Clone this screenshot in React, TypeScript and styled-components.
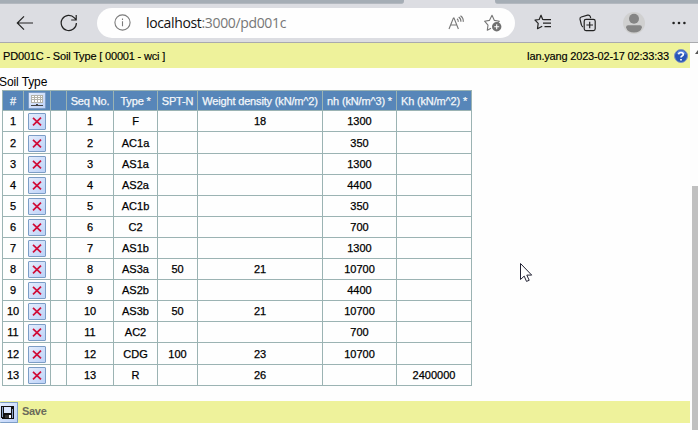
import React from "react";
import styled, { createGlobalStyle } from "styled-components";

const Global = createGlobalStyle`
  * { box-sizing: border-box; }
  html, body { margin: 0; height: 100%; overflow: hidden; background: #fefefe; }
  body { font: 11px "Liberation Sans", Arial, sans-serif; color: #000; }
`;

const Window = styled.div`
  width: 698px;
  height: 430px;
  display: flex;
  flex-direction: column;
  overflow: hidden;
  position: relative;
`;

const Tabs = styled.div`
  height: 4px;
  flex: none;
  display: flex;
  justify-content: space-between;
  background: #dcdde2;
`;

const TabStrip = styled.div<{ $width: number; $side: "left" | "right" }>`
  width: ${(p) => p.$width}px;
  background: #a5adb5;
  border-bottom: 1px solid #b3b8bf;
  border-radius: ${(p) => (p.$side === "left" ? "0 0 3px 0" : "0 0 0 3px")};
`;

const Toolbar = styled.div`
  height: 39px;
  flex: none;
  display: flex;
  align-items: center;
  padding: 0 12px 1px 16px;
  background: #dcdde2;
  border-bottom: 1px solid #a9aaae;
  svg { flex: none; display: block; }
`;

const NavButtons = styled.div`
  display: flex;
  align-items: center;
  gap: 26px;
`;

const Address = styled.div`
  width: 418px;
  height: 30px;
  margin-left: 19px;
  margin-right: 19px;
  padding: 0 13px 0 17px;
  display: flex;
  align-items: center;
  border-radius: 15px;
  background: #fefefe;
`;

const Url = styled.div`
  flex: 1;
  margin-left: 15px;
  font: 14px/20px "Open Sans", "Noto Sans", sans-serif;
  letter-spacing: -0.35px;
  color: #777;
  white-space: nowrap;
  span { color: #111; }
`;

const AddressActions = styled.div`
  display: flex;
  align-items: center;
  gap: 19px;
`;

const Actions = styled.div`
  flex: 1;
  display: flex;
  align-items: center;
  justify-content: space-between;
`;

const Body = styled.div`
  flex: 1;
  display: flex;
  min-height: 0;
`;

const Page = styled.main`
  width: 690px;
`;

const TitleBar = styled.header`
  height: 25px;
  display: flex;
  align-items: center;
  justify-content: space-between;
  padding: 0 2px 0 3px;
  background: #eef29b;
  white-space: nowrap;
  letter-spacing: -0.17px;
  -webkit-text-stroke: 0.15px currentColor;
`;

const User = styled.div`
  display: flex;
  align-items: center;
  gap: 5px;
  letter-spacing: -0.18px;
`;

const SectionTitle = styled.div`
  height: 15px;
  margin: 7px 0 0 -1px;
  font-size: 12px;
  line-height: 15px;
  letter-spacing: -0.1px;
`;

const Table = styled.div`
  width: 470px;
  margin-left: 2px;
  border-top: 1px solid #9bb3b3;
  border-left: 1px solid #9bb3b3;
`;

const Row = styled.div<{ $height: number; $head?: boolean }>`
  display: grid;
  grid-template-columns: 21px 27px 16px 47px 44px 40px 125px 74px 75px;
  height: ${(p) => p.$height}px;
  background: ${(p) => (p.$head ? "#5786b9" : "#fefefe")};
  color: ${(p) => (p.$head ? "#f4f7fa" : "#000")};
  letter-spacing: ${(p) => (p.$head ? -0.16 : 0)}px;
`;

const Cell = styled.div<{ $low?: boolean }>`
  display: flex;
  align-items: ${(p) => (p.$low ? "flex-end" : "center")};
  justify-content: center;
  padding-bottom: ${(p) => (p.$low ? 1 : 0)}px;
  border-right: 1px solid #9bb3b3;
  border-bottom: 1px solid #9bb3b3;
  white-space: nowrap;
  -webkit-text-stroke: 0.25px currentColor;
`;

const IconButton = styled.button`
  width: 18px;
  height: 17px;
  padding: 0;
  flex: none;
  display: grid;
  place-items: center;
  border: 1px solid #7c9dc6;
  border-radius: 1px;
  background: linear-gradient(135deg, #e4edfd, #bdd2f8);
  svg { display: block; }
`;

const SaveBar = styled.footer`
  height: 22px;
  margin-top: 15px;
  display: flex;
  align-items: center;
  background: #eef29b;
`;

const SaveButton = styled(IconButton)`
  height: 21px;
  border-left: 0;
  margin-top: 1px;
  padding-right: 2px;
`;

const SaveLabel = styled.span`
  margin: 0 0 2px 4px;
  font-weight: bold;
  letter-spacing: -0.3px;
  color: #6b6b5a;
`;

const ScrollTrack = styled.aside`
  flex: 1;
  padding-left: 2px;
  display: flex;
  flex-direction: column;
  justify-content: space-between;
  align-items: stretch;
  background: #fdfdfd;
`;

const ScrollArrow = styled.svg`
  width: 3px;
  height: 4px;
  margin: 7px 0 0 3px;
`;

const ScrollThumb = styled.div`
  height: 244px;
  background: #c0c0c0;
`;

const Cursor = styled.svg`
  position: absolute;
  left: 519px;
  top: 262px;
`;

const BackIcon = () => (
  <svg width="18" height="16" viewBox="0 0 18 16" fill="none" stroke="#222" strokeWidth="1.2">
    <path d="M17 8H1.5M8 1.3 1.3 8 8 14.7" />
  </svg>
);

const ReloadIcon = () => (
  <svg width="18" height="18" viewBox="0 0 18 18" fill="none" stroke="#222" strokeWidth="1.2">
    <path d="M16.4 9A7.6 7.6 0 1 1 14.4 3.8L16 5.6M16.2 1v5h-5" />
  </svg>
);

const InfoIcon = () => (
  <svg width="17" height="17" viewBox="0 0 17 17" fill="none" stroke="#7b7b7b" strokeWidth="1.1">
    <circle cx="8.5" cy="8.5" r="7.6" />
    <path d="M8.5 7.3v5M8.5 4.5v1.4" />
  </svg>
);

const ReadAloudIcon = () => (
  <svg width="17" height="16" viewBox="0 0 17 16" fill="none" stroke="#777" strokeWidth="1.1">
    <path d="M1 14 5.4 3h.6L10.4 14M2.6 10h6.4M9 3.8q1.5 1 1.2 3M10.7 2q2.5 1.8 2.2 4.8M12.5 .7q3.3 2.3 2.7 6.1" />
  </svg>
);

const FavoriteAddIcon = () => (
  <svg width="18" height="18" viewBox="0 0 18 18" fill="none" stroke="#777" strokeWidth="1.1" strokeLinejoin="round">
    <path d="m7 14.2-3.7 2 .7-5-3.4-4 4.8-.8L8 1.3l2.4 5.1 5 .8-2 2" />
    <circle cx="12.7" cy="12.7" r="4.7" fill="#707070" stroke="none" />
    <path d="M12.7 10.2v5M10.2 12.7h5" stroke="#fff" />
  </svg>
);

const FavoritesIcon = () => (
  <svg width="18" height="17" viewBox="0 0 18 17" fill="none" stroke="#222" strokeWidth="1.2" strokeLinejoin="round">
    <path d="M10 5.6 8.6 5.3 7 1.2 5.2 5.5 1 6.2l3.2 3.2-.7 5.3 4.7-2.4M10 5.7h7M9 9.2h8M10.5 12.7H17" />
  </svg>
);

const CollectionsIcon = () => (
  <svg width="17" height="18" viewBox="0 0 17 18" fill="none" stroke="#222" strokeWidth="1.2">
    <path d="M3.9 13Q2.6 12 2.3 10.5L1 5.2Q.7 3.5 2.3 3L8.6 1.2Q10.6 .8 11.2 2.4L11.7 4.2" />
    <rect x="5.2" y="5.4" width="11" height="11.2" rx="1.8" />
    <path d="M10.7 7.7v6.6M7.4 11H14" />
  </svg>
);

const AvatarIcon = () => (
  <svg width="22" height="22" viewBox="0 0 22 22">
    <circle cx="11" cy="11" r="11" fill="#d0d0d0" />
    <circle cx="11" cy="6.8" r="5" fill="#858585" />
    <path d="M3 15.5q0-2.2 2.2-2.2h11.6q2.2 0 2.2 2.2-1.5 5-8 5t-8-5Z" fill="#858585" />
  </svg>
);

const MoreIcon = () => (
  <svg width="14" height="4" viewBox="0 0 14 4" fill="#222">
    <circle cx="1.6" cy="2" r="1.3" />
    <circle cx="7" cy="2" r="1.3" />
    <circle cx="12.4" cy="2" r="1.3" />
  </svg>
);

const HelpIcon = () => (
  <svg width="14" height="14" viewBox="0 0 14 14">
    <circle cx="7" cy="7" r="6.5" fill="#2856b8" stroke="#8296c0" />
    <path d="M2.4 5Q4 1.5 7 1.6q4 .2 5 4Q7 4 2.4 5Z" fill="#5f8ae0" />
    <path d="M4.6 5.3Q4.8 3.5 7 3.5t2.3 1.8Q9.3 6.4 8 7.1 7 7.6 7 8.6M7 9.9v1.7" fill="none" stroke="#fff" strokeWidth="1.7" />
  </svg>
);

const GridIcon = () => (
  <svg width="14" height="13" viewBox="0 0 14 13" shapeRendering="crispEdges">
    <path fill="#b4b3aa" d="M1 1h12v8H1z" />
    <path fill="#fff" d="M2 2h2v1H2zM5 2h2v1H5zM8 2h2v1H8zM11 2h1v1h-1zM2 4h2v1H2zM5 4h2v1H5zM8 4h2v1H8zM11 4h1v1h-1zM2 6h2v2H2zM5 6h2v2H5zM8 6h2v2H8zM11 6h1v2h-1z" />
    <path fill="#444" d="M1 11h12v1H1zM6 10h2v2H6z" />
  </svg>
);

const DeleteIcon = () => (
  <svg width="10" height="9" viewBox="0 0 10 9" fill="none" stroke="#d00d38" strokeWidth="1.7">
    <path d="M1 .8 9 8.4M9 .6 1 8.4" />
  </svg>
);

const DiskIcon = () => (
  <svg width="14" height="14" viewBox="0 0 14 14" shapeRendering="crispEdges">
    <path d="M0 0h13v13H1L0 12Z" fill="#111" />
    <path d="M3 1h7v6H3z" fill="#dce8ff" />
    <path d="M1 1h1v10H1zM11 3h1v9h-1z" fill="#8ba4c8" />
    <path d="M4 9h6v3H4z" fill="#333" />
    <path d="M8 9h2v3H8z" fill="#fff" />
  </svg>
);

const rows: { height: number; cells: string[] }[] = [
  { height: 21, cells: ["F", "", "18", "1300", ""] },
  { height: 22, cells: ["AC1a", "", "", "350", ""] },
  { height: 21, cells: ["AS1a", "", "", "1300", ""] },
  { height: 21, cells: ["AS2a", "", "", "4400", ""] },
  { height: 21, cells: ["AC1b", "", "", "350", ""] },
  { height: 21, cells: ["C2", "", "", "700", ""] },
  { height: 21, cells: ["AS1b", "", "", "1300", ""] },
  { height: 21, cells: ["AS3a", "50", "21", "10700", ""] },
  { height: 21, cells: ["AS2b", "", "", "4400", ""] },
  { height: 21, cells: ["AS3b", "50", "21", "10700", ""] },
  { height: 21, cells: ["AC2", "", "", "700", ""] },
  { height: 22, cells: ["CDG", "100", "23", "10700", ""] },
  { height: 21, cells: ["R", "", "26", "", "2400000"] },
];

export default function App() {
  return (
    <Window>
      <Global />
      <Tabs>
        <TabStrip $width={404} $side="left" />
        <TabStrip $width={203} $side="right" />
      </Tabs>
      <Toolbar>
        <NavButtons>
          <BackIcon />
          <ReloadIcon />
        </NavButtons>
        <Address>
          <InfoIcon />
          <Url><span>localhost</span>:3000/pd001c</Url>
          <AddressActions>
            <ReadAloudIcon />
            <FavoriteAddIcon />
          </AddressActions>
        </Address>
        <Actions>
          <FavoritesIcon />
          <CollectionsIcon />
          <AvatarIcon />
          <MoreIcon />
        </Actions>
      </Toolbar>
      <Body>
        <Page>
          <TitleBar>
            <span>PD001C - Soil Type [ 00001 - wci ]</span>
            <User>Ian.yang 2023-02-17 02:33:33<HelpIcon /></User>
          </TitleBar>
          <SectionTitle>Soil Type</SectionTitle>
          <Table>
            <Row $height={20} $head>
              <Cell>#</Cell>
              <Cell><IconButton><GridIcon /></IconButton></Cell>
              <Cell />
              <Cell>Seq No.</Cell>
              <Cell>Type *</Cell>
              <Cell>SPT-N</Cell>
              <Cell>Weight density (kN/m^2)</Cell>
              <Cell>nh (kN/m^3) *</Cell>
              <Cell>Kh (kN/m^2) *</Cell>
            </Row>
            {rows.map(({ height, cells }, i) => (
              <Row key={i} $height={height}>
                <Cell>{i + 1}</Cell>
                <Cell $low><IconButton aria-label="Delete"><DeleteIcon /></IconButton></Cell>
                <Cell />
                <Cell>{i + 1}</Cell>
                {cells.map((text, c) => <Cell key={c}>{text}</Cell>)}
              </Row>
            ))}
          </Table>
          <SaveBar>
            <SaveButton aria-label="Save"><DiskIcon /></SaveButton>
            <SaveLabel>Save</SaveLabel>
          </SaveBar>
        </Page>
        <ScrollTrack>
          <ScrollArrow viewBox="0 0 3 4"><path d="M0 4 3 0v4Z" fill="#555" /></ScrollArrow>
          <ScrollThumb />
        </ScrollTrack>
      </Body>
      <Cursor width="14" height="22" viewBox="0 0 14 22">
        <path d="M1.5 1.5v16l3.7-3.4 2.3 5.3 2.7-1.1-2.4-5.2h4.9Z" fill="#fff" stroke="#223" strokeWidth="1" />
      </Cursor>
    </Window>
  );
}
